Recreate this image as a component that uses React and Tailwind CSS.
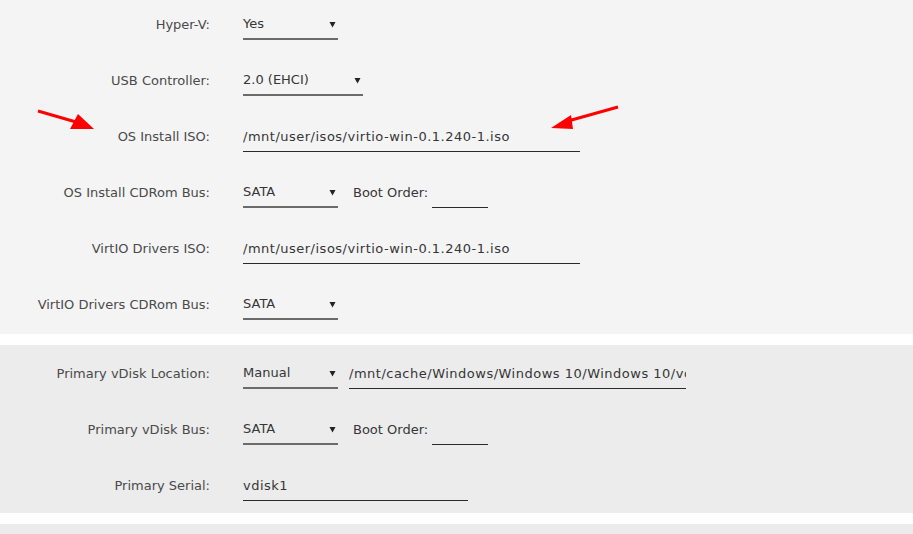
import React from "react";

const font = { fontFamily: '"DejaVu Sans", "Liberation Sans", sans-serif' };

function Caret() {
  return (
    <svg width="7" height="7" viewBox="0 0 7 7" className="shrink-0">
      <path d="M0.5 1 L6.5 1 L3.5 6.5 Z" fill="#222" />
    </svg>
  );
}

function Select({ value, w }) {
  return (
    <div
      className={`flex h-8 items-center justify-between border-b-2 border-[#6b6b6b] pr-[2px] pt-[2px] ${w}`}
    >
      <span>{value}</span>
      <Caret />
    </div>
  );
}

function Text({ value, w }) {
  return (
    <div
      className={`flex h-8 items-center overflow-hidden whitespace-nowrap border-b-[1.5px] border-[#2a2a2a] pt-[2px] tracking-[0.5px] ${w}`}
    >
      {value}
    </div>
  );
}

function BootOrder() {
  return (
    <div className="flex h-8 items-center">
      <span className="ml-[15px] w-[75px] whitespace-nowrap pt-[1px]">Boot Order:</span>
      <div className="ml-[4px] h-8 w-[56px] border-b-[1.5px] border-[#2a2a2a]" />
    </div>
  );
}

function Row({ label, children }) {
  return (
    <div className="flex h-8 items-stretch">
      <div className="flex w-[210px] shrink-0 items-center justify-end pt-[2px] text-[#4a4a4a]">
        {label}
      </div>
      <div className="ml-[33px] flex items-start text-[#363636]">{children}</div>
    </div>
  );
}

export default function App() {
  return (
    <div
      className="relative h-[534px] w-[913px] overflow-hidden bg-white text-[13px]"
      style={font}
    >
      <div className="flex flex-col gap-6 bg-[#f4f4f4] pb-[14px] pt-[8px]">
        <Row label="Hyper-V:">
          <Select value="Yes" w="w-[95px]" />
        </Row>
        <Row label="USB Controller:">
          <Select value="2.0 (EHCI)" w="w-[120px]" />
        </Row>
        <Row label="OS Install ISO:">
          <Text value="/mnt/user/isos/virtio-win-0.1.240-1.iso" w="w-[337px]" />
        </Row>
        <Row label="OS Install CDRom Bus:">
          <Select value="SATA" w="w-[95px]" />
          <BootOrder />
        </Row>
        <Row label="VirtIO Drivers ISO:">
          <Text value="/mnt/user/isos/virtio-win-0.1.240-1.iso" w="w-[337px]" />
        </Row>
        <Row label="VirtIO Drivers CDRom Bus:">
          <Select value="SATA" w="w-[95px]" />
        </Row>
      </div>

      <div className="mt-[11px] flex flex-col gap-6 bg-[#ececec] py-[12px]">
        <Row label="Primary vDisk Location:">
          <Select value="Manual" w="w-[95px]" />
          <div className="ml-[11px]">
            <Text
              value="/mnt/cache/Windows/Windows 10/Windows 10/vdisk1.img"
              w="w-[337px]"
            />
          </div>
        </Row>
        <Row label="Primary vDisk Bus:">
          <Select value="SATA" w="w-[95px]" />
          <BootOrder />
        </Row>
        <Row label="Primary Serial:">
          <Text value="vdisk1" w="w-[225px]" />
        </Row>
      </div>

      <div className="mt-[11px] h-[40px] bg-[#ececec]" />

      <svg
        className="pointer-events-none absolute left-0 top-0"
        width="913"
        height="534"
        viewBox="0 0 913 534"
      >
        <line x1="38" y1="111" x2="76" y2="122" stroke="#ff0000" strokeWidth="3" />
        <path d="M94 129 L70 129 L78 114 Z" fill="#ff0000" />
        <line x1="618" y1="107" x2="568" y2="121" stroke="#ff0000" strokeWidth="3" />
        <path d="M551 128 L573 129 L571 115 Z" fill="#ff0000" />
      </svg>
    </div>
  );
}
